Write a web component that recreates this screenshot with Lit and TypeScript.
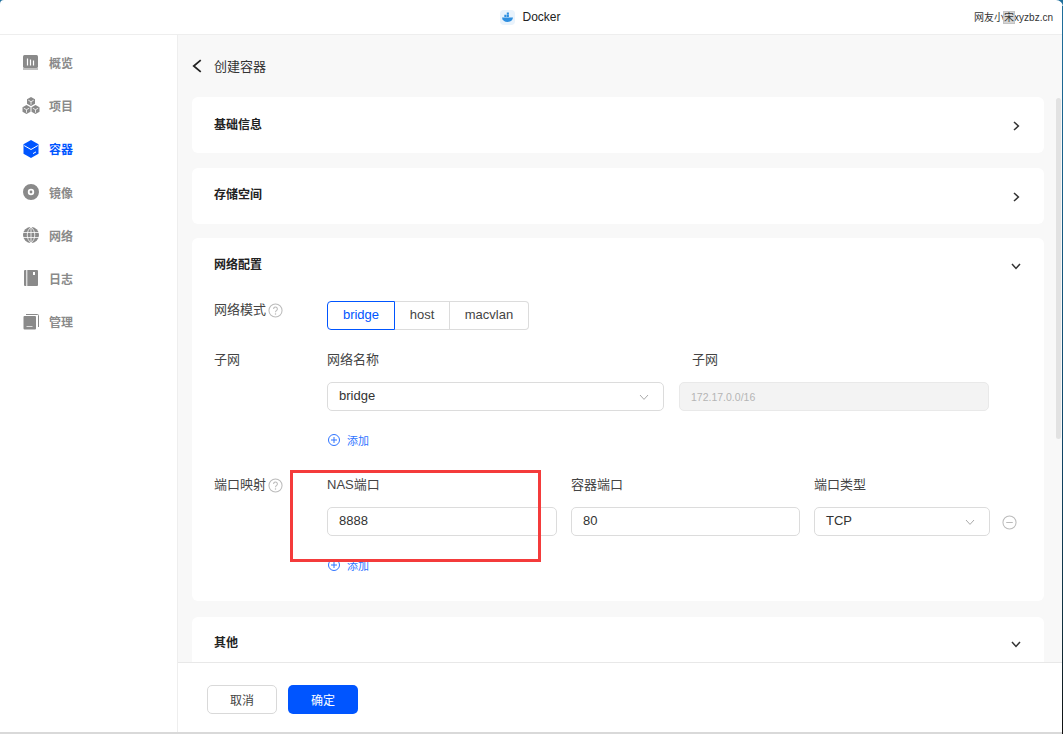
import { LitElement, html, css, svg } from "lit";
import { customElement } from "lit/decorators.js";

const chevron = (d: string, cls = "chev") =>
  html`<svg class=${cls} viewBox="0 0 12 12"><path d=${d} fill="none" stroke="currentColor" stroke-width="1.5"/></svg>`;
const RIGHT = "M4 2l4.400 4L4 10";
const DOWN = "M2 4l4 4.400L10 4";
const BACK = "M7.500 1L1.500 6l6 5";

const navIcons: Record<string, unknown> = {
  overview: svg`<rect x="0" y="0" width="15" height="13" rx="1.500"/><rect x="0" y="13" width="15" height="2" opacity=".55"/><path d="M4.500 3.500v7M7.500 4.500v6M10.500 5.500v5" stroke="#fff" stroke-width="1.200"/>`,
  project: svg`<g transform="translate(-.5,-1)"><path d="M8.500 0l4 2.300v4.400l-4 2.300-4-2.300V2.300zM4 8l4 2.300v4.400L4 17l-4-2.300v-4.400zM13 8l4 2.300v4.400L13 17l-4-2.300v-4.400z"/><path d="M5.800 3.200l2.700 1.500 2.700-1.500M8.500 4.700v3M1.300 11.200L4 12.700l2.700-1.500M4 12.700v3M10.300 11.200l2.700 1.500 2.700-1.500M13 12.700v3" fill="none" stroke="#fff" stroke-width=".8"/></g>`,
  container: svg`<path d="M8 -1l7.500 4.200v9.600L8 17 .5 12.800V3.200z"/><path d="M1.200 4.600L8 8.500l6.800-3.900M10 12.600l3-1.700" fill="none" stroke="#fff" stroke-width="1"/>`,
  image: svg`<path fill-rule="evenodd" d="M8 0a8 8 0 110 16A8 8 0 018 0zm0 4.800a3.200 3.200 0 100 6.400 3.200 3.200 0 000-6.400z"/><circle cx="8" cy="8" r="1.400"/>`,
  network: svg`<circle cx="8" cy="8" r="8"/><path d="M0 5.500h16M0 10.500h16M8 0v16M8 0c-5 4-5 12 0 16M8 0c5 4 5 12 0 16" fill="none" stroke="#fff" stroke-width=".8"/>`,
  log: svg`<rect x="1" y="0" width="14" height="16" rx="1"/><path d="M3.800 0v16" stroke="#fff" stroke-width="1"/><rect x="10" y="2" width="2" height="3" fill="#fff"/>`,
  manage: svg`<rect x="0.500" y="2" width="12.500" height="13.500" rx="1"/><path d="M3 0.500h11.500a1 1 0 011 1V13" fill="none" stroke="currentColor" stroke-width="1"/><path d="M3.500 12.500h6" stroke="#fff" stroke-width="1" opacity=".7"/>`,
};

const NAV = [
  { key: "overview", label: "概览" },
  { key: "project", label: "项目" },
  { key: "container", label: "容器", active: true },
  { key: "image", label: "镜像" },
  { key: "network", label: "网络" },
  { key: "log", label: "日志" },
  { key: "manage", label: "管理" },
];

@customElement("app-root")
export class AppRoot extends LitElement {
  static styles = css`
    :host {
      display: block;
      width: 1063px;
      height: 734px;
      overflow: hidden;
      background: #fff;
      font-family: "Liberation Sans", "Noto Sans CJK SC", sans-serif;
      font-size: 13px;
      color: #333;
    }
    .window {
      height: 734px;
      box-sizing: border-box;
      display: flex;
      flex-direction: column;
      border-bottom: 2px solid #d9d9d9;
      position: relative;
    }
    .edge {
      position: absolute;
      right: 0;
      top: 6px;
      bottom: -2px;
      width: 1px;
      background: linear-gradient(#1f6f9c, #0f4668 60%, #10303f 85%, #111 100%);
    }
    .corner-r {
      position: absolute;
      right: 0;
      top: 0;
      width: 8px;
      height: 8px;
    }
    .corner-l {
      position: absolute;
      left: 0;
      top: 0;
      width: 4px;
      height: 4px;
    }

    /* Header */
    .header {
      height: 35px;
      box-sizing: border-box;
      flex: none;
      border-bottom: 1px solid #eeeeee;
      display: flex;
      align-items: center;
      justify-content: center;
      gap: 7px;
      padding-right: 2px;
      position: relative;
      font-size: 12px;
      color: #222;
    }
    .logo {
      width: 15px;
      height: 15px;
      display: block;
    }
    .watermark {
      position: absolute;
      right: 10px;
      top: 9px;
      font-size: 10px;
      color: #333;
    }
    .blurred {
      background: #d6d6d6;
      outline: 1px solid #c4c4c4;
    }

    .body {
      flex: 1;
      display: flex;
      min-height: 0;
    }

    /* Sidebar */
    .side {
      width: 178px;
      box-sizing: border-box;
      flex: none;
      border-right: 1px solid #eeeeee;
      padding-top: 7px;
    }
    .nav {
      height: 43.170px;
      display: flex;
      align-items: center;
      gap: 10px;
      padding: 0 0 2px 23px;
      box-sizing: border-box;
      font-size: 12px;
      font-weight: 700;
      color: #8a8a8a;
    }
    .nav.active {
      color: #0055ff;
    }
    .nav svg {
      width: 16px;
      height: 16px;
      fill: currentColor;
      overflow: visible;
    }

    /* Main */
    .main {
      flex: 1;
      min-width: 0;
      display: flex;
      flex-direction: column;
      background: #f8f8f8;
      position: relative;
    }
    .scroll {
      flex: 1;
      min-height: 0;
      overflow: hidden;
      padding: 0 19px 0 14px;
    }
    .title {
      height: 62px;
      box-sizing: border-box;
      padding-bottom: 2px;
      display: flex;
      align-items: center;
      gap: 8px;
      font-size: 13px;
      color: #333;
    }
    .back {
      width: 14px;
      height: 14px;
      color: #222;
      margin-top: 1px;
    }
    .card {
      background: #fff;
      border-radius: 6px;
      padding: 0 22px;
    }
    .card.basic {
      height: 56px;
      margin-bottom: 15px;
    }
    .card.storage {
      height: 56px;
      margin-bottom: 14px;
    }
    .card.net {
      height: 363px;
      margin-bottom: 16px;
    }
    .card.other {
      height: 56px;
    }
    .card-head {
      height: 52px;
      box-sizing: border-box;
      padding-bottom: 2px;
      display: flex;
      align-items: center;
      justify-content: space-between;
      font-size: 12px;
      font-weight: 700;
      color: #222;
    }
    .basic .card-head {
      height: 54px;
    }
    .storage .card-head {
      height: 53px;
    }
    .other .card-head {
      height: 50px;
    }
    .chev {
      width: 12px;
      height: 12px;
      color: #333;
      margin-top: 6px;
    }

    .thumb {
      position: absolute;
      right: 2px;
      top: 63px;
      width: 5px;
      height: 341px;
      border-radius: 3px;
      background: #e2e2e2;
    }

    /* Form */
    .row {
      display: flex;
    }
    .row.mode {
      height: 50px;
      margin-top: 11px;
    }
    .row.add-row {
      height: 65px;
      box-sizing: border-box;
      padding: 21px 0 0 113px;
    }
    .label {
      width: 113px;
      flex: none;
      display: flex;
      align-items: flex-start;
      gap: 2px;
      font-size: 13px;
      color: #444;
      line-height: 18px;
    }
    .help {
      width: 15px;
      height: 15px;
      color: #bbb;
      margin-top: 2px;
    }
    .seg {
      display: flex;
      height: 29px;
    }
    .seg span {
      display: flex;
      align-items: center;
      justify-content: center;
      height: 100%;
      box-sizing: border-box;
      padding-bottom: 2px;
      border: 1px solid #dcdcdc;
      border-left: none;
      font-size: 13px;
      color: #444;
    }
    .seg .on {
      width: 68px;
      border: 1px solid #0055ff;
      border-radius: 4px 0 0 4px;
      color: #0055ff;
    }
    .seg .mid {
      width: 55px;
    }
    .seg .last {
      width: 79px;
      border-radius: 0 4px 4px 0;
    }
    .fields {
      display: flex;
      flex: 1;
      gap: 14px;
    }
    .fields.subnet {
      gap: 15px;
    }
    .w-name {
      width: 337px;
    }
    .w-subnet {
      width: 310px;
    }
    .w-nas {
      width: 230px;
    }
    .w-cont {
      width: 229px;
    }
    .w-type {
      width: 176px;
    }
    .field-label {
      font-size: 13px;
      line-height: 18px;
      color: #444;
      margin-bottom: 13px;
    }
    .field-label.indent {
      margin-left: 13px;
    }
    .input {
      height: 29px;
      box-sizing: border-box;
      border: 1px solid #dcdcdc;
      border-radius: 5px;
      display: flex;
      align-items: center;
      justify-content: space-between;
      padding: 0 11px 2px;
      font-size: 13px;
      color: #333;
      background: #fff;
    }
    .input .chev {
      color: #aaa;
      margin: 2px 2px 0 0;
    }
    .input .chev path {
      stroke-width: 1;
    }
    .input.disabled {
      background: #f3f3f3;
      color: #b5b5b5;
      font-size: 10.500px;
      border-color: #e9e9e9;
      padding-bottom: 0;
    }
    .add {
      display: flex;
      align-items: center;
      height: 15px;
      gap: 6px;
      font-size: 11px;
      color: #2f74ff;
    }
    .add svg {
      width: 14px;
      height: 14px;
    }
    .minus {
      width: 15px;
      height: 15px;
      color: #bbb;
      margin: 39px 0 0 -2px;
    }

    /* Footer */
    .footer {
      height: 70px;
      box-sizing: border-box;
      flex: none;
      background: #fff;
      border-top: 1px solid #e8e8e8;
      display: flex;
      align-items: center;
      gap: 11px;
      padding: 4px 0 0 29px;
      position: relative;
    }
    .btn {
      width: 70px;
      height: 29px;
      box-sizing: border-box;
      border-radius: 5px;
      display: flex;
      align-items: center;
      justify-content: center;
      font-size: 12px;
    }
    .btn.cancel {
      border: 1px solid #d9d9d9;
      color: #444;
      background: #fff;
    }
    .btn.ok {
      background: #0055ff;
      color: #fff;
    }

    /* Annotation drawn over the form */
    .mark {
      position: absolute;
      left: 112px;
      top: 435px;
      width: 251px;
      height: 92px;
      box-sizing: border-box;
      border: 3px solid #f43b3b;
      pointer-events: none;
    }
  `;

  private help() {
    return html`<svg class="help" viewBox="0 0 16 16">
      <circle cx="8" cy="8" r="7" fill="none" stroke="currentColor" stroke-width="1.100"/>
      <path d="M6 6.300a2 2 0 113.200 1.600C8.400 8.500 8 8.900 8 9.800" fill="none" stroke="currentColor" stroke-width="1.100"/>
      <circle cx="8" cy="11.700" r=".8" fill="currentColor"/>
    </svg>`;
  }

  private add() {
    return html`<div class="add">
      <svg viewBox="0 0 14 14" fill="none" stroke="currentColor" stroke-width="1">
        <circle cx="7" cy="7" r="5.500"/>
        <path d="M4 7h6M7 4v6"/>
      </svg>
      添加
    </div>`;
  }

  render() {
    return html`
      <div class="window">
        <div class="header">
          <svg class="logo" viewBox="0 0 15 15">
            <rect width="15" height="15" rx="4" fill="#e9f3fc"/>
            <path d="M2 7.500h11c-.3 2.900-2.500 4.500-5.500 4.500S2.300 10.400 2 7.500z" fill="#2e8fe0"/>
            <path d="M4.300 4.800h2.100v2.200H4.300zM6.800 4.800h2.100v2.200H6.800zM6.800 2.400h2.100v2H6.800z" fill="#2e8fe0"/>
          </svg>
          Docker
          <span class="watermark">网友小<span class="blurred">宋</span>xyzbz.cn</span>
        </div>
        <div class="body">
          <nav class="side">
            ${NAV.map(
              (n) => html`<div class="nav ${n.active ? "active" : ""}">
                <svg viewBox="0 0 16 16">${navIcons[n.key]}</svg>
                ${n.label}
              </div>`
            )}
          </nav>
          <div class="main">
            <div class="scroll">
              <div class="title">
                ${chevron(BACK, "back")}
                创建容器
              </div>
              <div class="card basic">
                <div class="card-head">基础信息 ${chevron(RIGHT)}</div>
              </div>
              <div class="card storage">
                <div class="card-head">存储空间 ${chevron(RIGHT)}</div>
              </div>
              <div class="card net">
                <div class="card-head">网络配置 ${chevron(DOWN)}</div>
                <div class="row mode">
                  <div class="label">网络模式 ${this.help()}</div>
                  <div class="seg">
                    <span class="on">bridge</span>
                    <span class="mid">host</span>
                    <span class="last">macvlan</span>
                  </div>
                </div>
                <div class="row">
                  <div class="label">子网</div>
                  <div class="fields subnet">
                    <div class="w-name">
                      <div class="field-label">网络名称</div>
                      <div class="input">bridge ${chevron(DOWN)}</div>
                    </div>
                    <div class="w-subnet">
                      <div class="field-label indent">子网</div>
                      <div class="input disabled">172.17.0.0/16</div>
                    </div>
                  </div>
                </div>
                <div class="row add-row">${this.add()}</div>
                <div class="row">
                  <div class="label">端口映射 ${this.help()}</div>
                  <div class="fields">
                    <div class="w-nas">
                      <div class="field-label">NAS端口</div>
                      <div class="input">8888</div>
                    </div>
                    <div class="w-cont">
                      <div class="field-label">容器端口</div>
                      <div class="input">80</div>
                    </div>
                    <div class="w-type">
                      <div class="field-label">端口类型</div>
                      <div class="input">TCP ${chevron(DOWN)}</div>
                    </div>
                    <svg class="minus" viewBox="0 0 16 16" fill="none" stroke="currentColor" stroke-width="1.100">
                      <circle cx="8" cy="8" r="7"/>
                      <path d="M4.500 8h7"/>
                    </svg>
                  </div>
                </div>
                <div class="row add-row">${this.add()}</div>
              </div>
              <div class="card other">
                <div class="card-head">其他 ${chevron(DOWN)}</div>
              </div>
            </div>
            <div class="thumb"></div>
            <div class="footer">
              <div class="btn cancel">取消</div>
              <div class="btn ok">确定</div>
            </div>
            <div class="mark"></div>
          </div>
        </div>
        <div class="edge"></div>
        <svg class="corner-r" viewBox="0 0 8 8"><path d="M1 0a7 7 0 017 7V0z" fill="#1f6f9c"/></svg>
        <svg class="corner-l" viewBox="0 0 4 4"><path d="M0 0h4a4 4 0 00-4 4z" fill="#1f6f9c"/></svg>
      </div>
    `;
  }
}
